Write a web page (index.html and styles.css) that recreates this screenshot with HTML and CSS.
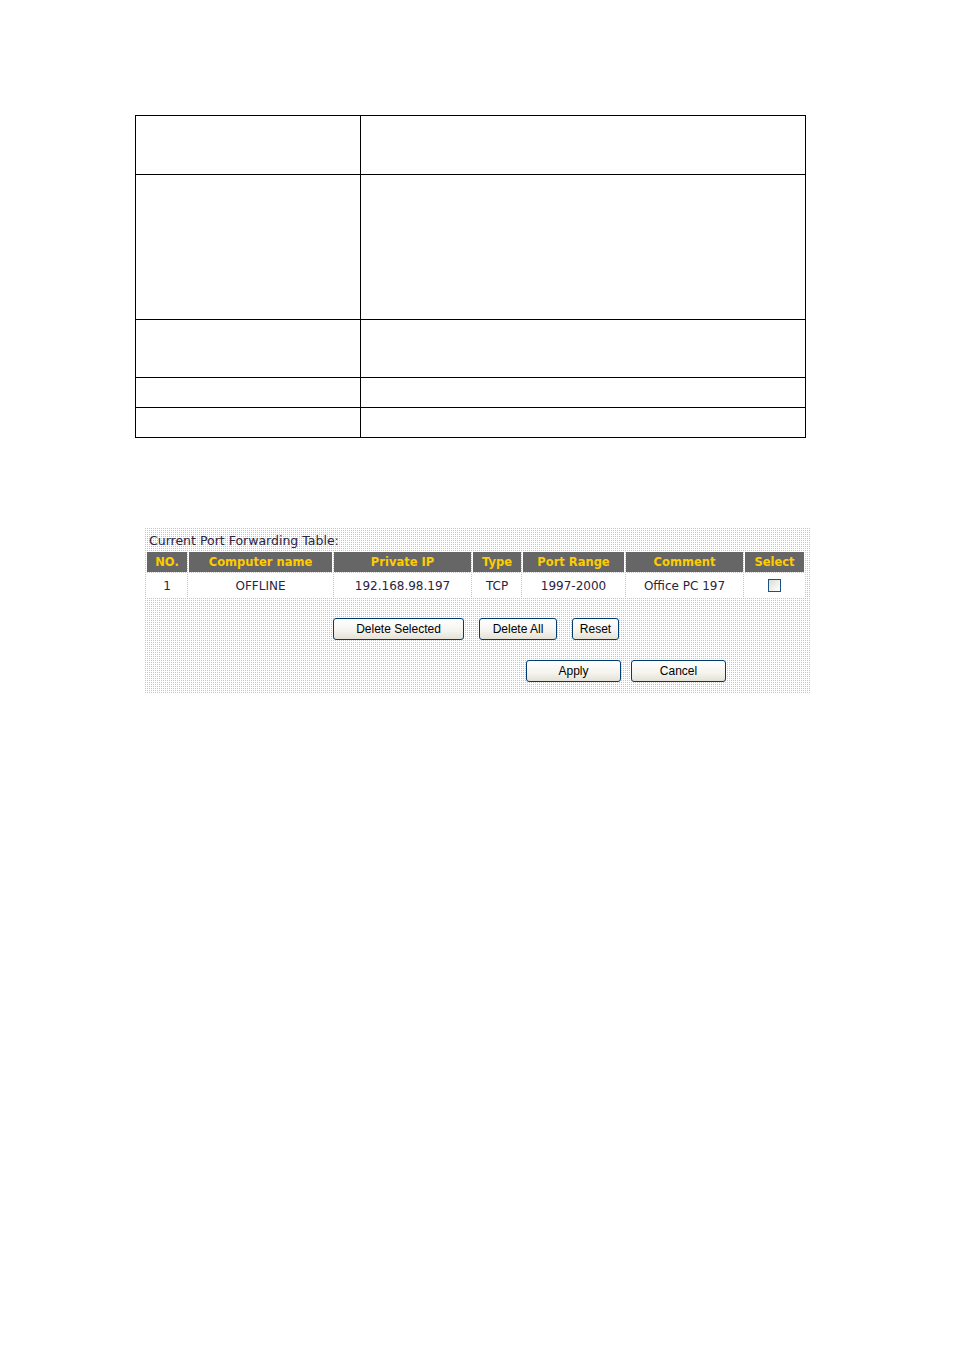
FILE: index.html
```html
<!DOCTYPE html>
<html>
<head>
<meta charset="utf-8">
<link rel="stylesheet" href="styles.css">
</head>
<body>
<div class="page">
  <table class="doc">
    <tr class="r1"><td class="c1"></td><td></td></tr>
    <tr class="r2"><td class="c1"></td><td></td></tr>
    <tr class="r3"><td class="c1"></td><td></td></tr>
    <tr class="r4"><td class="c1"></td><td></td></tr>
    <tr class="r5"><td class="c1"></td><td></td></tr>
  </table>

  <div class="panel">
    <div class="title">Current Port Forwarding Table:</div>
    <table class="pf">
      <colgroup>
        <col class="w-no"><col class="w-name"><col class="w-ip"><col class="w-type"><col class="w-range"><col class="w-comment"><col class="w-sel">
      </colgroup>
      <tr class="head">
        <th>NO.</th><th>Computer name</th><th>Private IP</th><th>Type</th><th>Port Range</th><th>Comment</th><th>Select</th>
      </tr>
      <tr class="row">
        <td>1</td><td>OFFLINE</td><td>192.168.98.197</td><td>TCP</td><td>1997-2000</td><td>Office PC 197</td><td><span class="chk"></span></td>
      </tr>
    </table>
    <div class="btns1">
      <button class="btn b-delsel">Delete Selected</button>
      <button class="btn b-delall">Delete All</button>
      <button class="btn b-reset">Reset</button>
    </div>
    <div class="btns2">
      <button class="btn b-apply">Apply</button>
      <button class="btn b-cancel">Cancel</button>
    </div>
  </div>
</div>
</body>
</html>
```

FILE: styles.css
```css
html, body {
  margin: 0;
  padding: 0;
  background: #fff;
}
.page {
  width: 954px;
  height: 1350px;
  padding-top: 115px;
  box-sizing: border-box;
}
.doc {
  margin-left: 135px;
  width: 671px;
  border-collapse: collapse;
}
.doc td {
  border: 1px solid #000;
  padding: 0;
}
.doc .c1 { width: 224px; }
.doc .r1 td { height: 58px; }
.doc .r2 td { height: 144px; }
.doc .r3 td { height: 57px; }
.doc .r4 td { height: 29px; }
.doc .r5 td { height: 29px; }

.panel {
  margin-top: 90px;
  margin-left: 144px;
  width: 666px;
  height: 165px;
  box-sizing: border-box;
  padding: 2px 0 0 1px;
  background: repeating-conic-gradient(#c4c4c4 0 25%, #fff 0 100%) 0 0 / 2px 2px;
  font-family: "DejaVu Sans", Verdana, sans-serif;
}
.title {
  font-size: 12.5px;
  color: #2a2440;
  padding-left: 4px;
  height: 20px;
  line-height: 21px;
}
.pf {
  table-layout: fixed;
  border-spacing: 2px 2px;
  width: 657px;
  margin-top: 0;
}
.w-no { width: 40px; }
.w-name { width: 143px; }
.w-ip { width: 137px; }
.w-type { width: 48px; }
.w-range { width: 101px; }
.w-comment { width: 117px; }
.w-sel { width: 59px; }
.pf th {
  background: #666666;
  color: #ffcc00;
  font-size: 11.5px;
  font-weight: bold;
  height: 20px;
  padding: 0;
  text-align: center;
  white-space: nowrap;
}
.pf td {
  background: #fff;
  height: 24px;
  padding: 0;
  font-size: 12px;
  color: #2a2440;
  text-align: center;
  white-space: nowrap;
}
.chk {
  display: inline-block;
  width: 11px;
  height: 11px;
  border: 1px solid #1c5180;
  background: linear-gradient(135deg, #dcdcd6, #ffffff);
  vertical-align: middle;
  margin-top: -2px;
}
.btns1 {
  display: flex;
  gap: 15px;
  margin-top: 18px;
  padding-left: 188px;
}
.btns2 {
  display: flex;
  gap: 10px;
  margin-top: 20px;
  padding-left: 381px;
}
.btn {
  font-family: "Liberation Sans", Arial, sans-serif;
  font-size: 12px;
  color: #000;
  height: 22px;
  padding: 0;
  border: 1px solid #003c74;
  border-radius: 3px;
  background: linear-gradient(#ffffff, #f4f3ee 60%, #e3e1d6);
  box-sizing: border-box;
}
.b-delsel { width: 131px; }
.b-delall { width: 78px; }
.b-reset { width: 47px; }
.b-apply { width: 95px; }
.b-cancel { width: 95px; }
```
